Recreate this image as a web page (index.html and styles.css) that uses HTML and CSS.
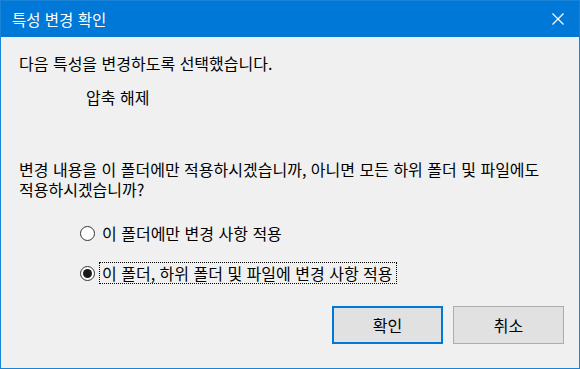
FILE: index.html
```html
<!DOCTYPE html>
<html lang="ko">
<head>
    <meta charset="UTF-8">
    <title>특성 변경 확인</title>
    <link rel="stylesheet" href="styles.css">
</head>
<body>
    <div class="window">
        <div class="titlebar">
            <span class="title">특성 변경 확인</span>
            <svg class="close-icon" width="12" height="12" viewBox="0 0 12 12">
                <path d="M0.5 0.5 L11.5 11.5 M11.5 0.5 L0.5 11.5" stroke="#fff" stroke-width="1.2" fill="none"/>
            </svg>
        </div>

        <div class="content">
            <p class="intro">다음 특성을 변경하도록 선택했습니다.</p>
            <p class="attribute">압축 해제</p>

            <p class="question">변경 내용을 이 폴더에만 적용하시겠습니까, 아니면 모든 하위 폴더 및 파일에도 적용하시겠습니까?</p>

            <div class="options">
                <div class="option">
                    <span class="radio"></span>
                    <span class="option-label">이 폴더에만 변경 사항 적용</span>
                </div>
                <div class="option">
                    <span class="radio checked"></span>
                    <span class="option-label focused">이 폴더, 하위 폴더 및 파일에 변경 사항 적용</span>
                </div>
            </div>

            <div class="buttons">
                <button class="btn btn-default">확인</button>
                <button class="btn">취소</button>
            </div>
        </div>
    </div>
</body>
</html>
```

FILE: styles.css
```css
body {
    margin: 0;
    padding: 0;
    font-family: "Noto Sans CJK KR", "Noto Sans", sans-serif;
    font-size: 16px;
    color: #000;
}
.window {
    width: 580px;
    height: 369px;
    box-sizing: border-box;
    border: 1px solid #1883d7;
    background-color: #f0f0f0;
    display: flex;
    flex-direction: column;
}
.titlebar {
    height: 36px;
    background-color: #0078d7;
    color: white;
    display: flex;
    align-items: center;
    justify-content: space-between;
    padding: 0 15px 0 11px;
}
.title {
    font-size: 15.5px;
    line-height: 20px;
    margin-top: -1px;
}
.content {
    flex: 1;
    padding: 0 15px 0 18px;
    display: flex;
    flex-direction: column;
}
.content p {
    margin: 0;
    line-height: 20px;
    word-break: keep-all;
}
.intro {
    margin-top: 16px !important;
}
.attribute {
    margin-top: 14px !important;
    padding-left: 67px;
}
.question {
    margin-top: 52px !important;
}
.options {
    display: flex;
    flex-direction: column;
    gap: 18px;
    margin-top: 23px;
    padding-left: 61px;
}
.option {
    display: flex;
    align-items: center;
    height: 22px;
}
.radio {
    width: 13px;
    height: 13px;
    border: 1px solid #333;
    border-radius: 50%;
    background: white;
    display: flex;
    align-items: center;
    justify-content: center;
    margin-right: 4px;
}
.radio.checked::after {
    content: "";
    width: 9px;
    height: 9px;
    border-radius: 50%;
    background: #1a1a1a;
}
.option-label {
    line-height: 20px;
    padding: 0 3px 0 2px;
    border: 1px dotted transparent;
}
.option-label.focused {
    border-color: #000;
}
.buttons {
    display: flex;
    justify-content: flex-end;
    gap: 10px;
    margin-top: 22px;
}
.btn {
    width: 111px;
    height: 38px;
    font-family: inherit;
    font-size: 16px;
    background-color: #e1e1e1;
    border: 1px solid #adadad;
    color: #000;
    padding: 0;
}
.btn-default {
    border: 2px solid #0078d7;
}
```
